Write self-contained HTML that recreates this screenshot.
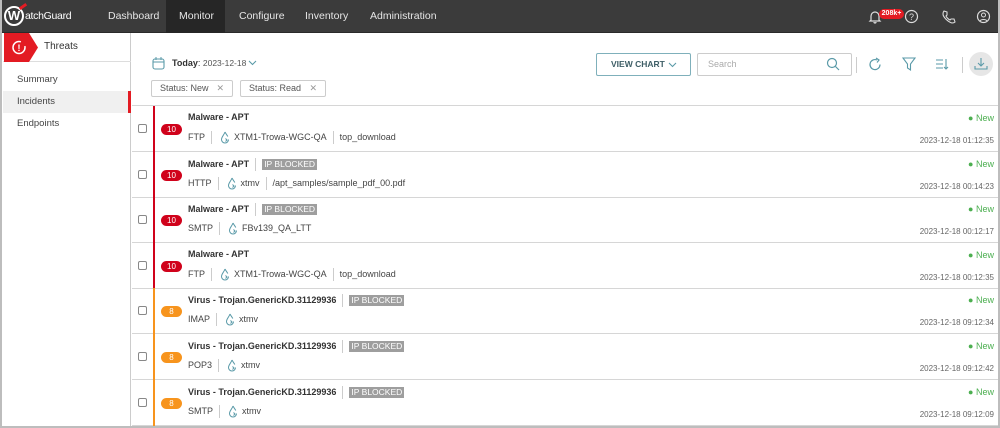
<!DOCTYPE html>
<html><head><meta charset="utf-8"><style>
*{margin:0;padding:0;box-sizing:border-box}
body{width:1000px;height:428px;overflow:hidden;background:#fff;font-family:"Liberation Sans",sans-serif;color:#333;position:relative}
.frame{position:absolute;inset:0;border:2px solid #bdbdbd;border-top:none;pointer-events:none;z-index:10}
.top{position:absolute;left:0;top:0;width:1000px;height:33px;background:#3b3b3b;border-bottom:1px solid #2a2a2a}
.nav{position:absolute;top:0;height:33px;line-height:33px;color:#e6e6e6;font-size:10.5px;white-space:nowrap}
.side{position:absolute;left:3px;top:33px;width:128px;height:395px;background:#fff;border-right:1px solid #ccc}
.a{position:absolute}
.row{position:absolute;left:132px;width:866px;height:46px;border-bottom:1px solid #d6d6d6}
.cb{position:absolute;left:6px;top:18px;width:9px;height:9px;border:1px solid #888;border-radius:2px}
.bar{position:absolute;left:21px;top:0;width:2px;height:46px}
.badge{position:absolute;left:29px;top:18px;width:21px;height:11px;border-radius:6px;color:#fff;font-size:8px;line-height:11px;text-align:center}
.title{position:absolute;left:56px;top:6px;font-size:9px;font-weight:bold;color:#333;white-space:nowrap}
.ipb{display:inline-block;background:#9e9e9e;color:#fff;font-weight:normal;font-size:8.5px;padding:0 2px;line-height:11px}
.sep{display:inline-block;width:1px;height:13px;background:#ccc;vertical-align:middle;margin:0 6px}
.l2{position:absolute;left:56px;top:24px;font-size:9px;color:#444;white-space:nowrap;line-height:14px}
.dr{display:inline-block;vertical-align:middle;margin:0 4px 0 2px}
.new{position:absolute;right:4px;top:7px;font-size:9px;color:#4caf50}
.date{position:absolute;right:4px;top:30px;font-size:8px;color:#666}
.chip{position:absolute;top:80px;height:17px;border:1px solid #ccc;border-radius:2px;font-size:9px;color:#555;line-height:15px;padding-left:8px}
</style></head><body>
<div class="top"></div>
<div class="a" style="left:4px;top:6px;width:20px;height:20px;border-radius:50%;border:2px solid #fff;color:#fff;font-weight:bold;font-size:13px;line-height:16px;text-align:center">W</div>
<div class="a" style="left:19px;top:5px;width:8px;height:3px;background:#e31b23;transform:rotate(-35deg)"></div>
<div class="a" style="left:25px;top:10px;color:#fff;font-size:10.5px;letter-spacing:-0.3px">atchGuard</div>
<div class="nav" style="left:108px">Dashboard</div>
<div class="a" style="left:166px;top:0;width:59px;height:33px;background:#262626"></div>
<div class="nav" style="left:179px">Monitor</div>
<div class="nav" style="left:239px">Configure</div>
<div class="nav" style="left:305px">Inventory</div>
<div class="nav" style="left:370px">Administration</div>
<svg class="a" style="left:868px;top:9px" width="14" height="16" viewBox="0 0 14 16"><path d="M3 11V7a4 4 0 0 1 8 0v4l1 1H2z M6 13a1 1 0 0 0 2 0" fill="none" stroke="#ddd" stroke-width="1.2"/></svg>
<div class="a" style="left:879px;top:9px;width:25px;height:10px;background:#e31b23;border-radius:5px;color:#fff;font-size:7px;font-weight:bold;line-height:10px;text-align:center">208k+</div>
<svg class="a" style="left:904px;top:9px" width="15" height="15"><circle cx="7.5" cy="7.5" r="6" fill="none" stroke="#ddd" stroke-width="1.2"/><text x="7.5" y="11" font-size="9" fill="#ddd" text-anchor="middle" font-family="Liberation Sans">?</text></svg>
<svg class="a" style="left:941px;top:9px" width="15" height="15"><path d="M3 2l3 1 0 3-1 1c1 2 2 3 4 4l1-1 3 0 1 3c-1 1-2 1-3 1C7 13 2 8 2 5c0-1 0-2 1-3z" fill="none" stroke="#ddd" stroke-width="1.1"/></svg>
<svg class="a" style="left:976px;top:9px" width="15" height="15"><circle cx="7.5" cy="7.5" r="6" fill="none" stroke="#ddd" stroke-width="1.2"/><circle cx="7.5" cy="6" r="2" fill="none" stroke="#ddd"/><path d="M4 12c1-2 6-2 7 0" fill="none" stroke="#ddd"/></svg>

<div class="side">
<div class="a" style="left:0;top:0;width:128px;height:29px;border-bottom:1px solid #ddd"></div>
<svg class="a" style="left:1px;top:0" width="36" height="30"><path d="M0 0h25l9 14.5-9 14.5H0z" fill="#e31b23"/><circle cx="15" cy="14.5" r="6" fill="none" stroke="#fff" stroke-width="1.5" stroke-dasharray="30 6"/><text x="15" y="18" font-size="9" font-weight="bold" fill="#fff" text-anchor="middle" font-family="Liberation Sans">!</text></svg>
<div class="a" style="left:41px;top:8px;font-size:10px">Threats</div>
<div class="a" style="left:14px;top:41px;font-size:9.5px;color:#444">Summary</div>
<div class="a" style="left:0;top:58px;width:128px;height:22px;background:#f0f0f0"></div>
<div class="a" style="left:125px;top:58px;width:3px;height:22px;background:#e31b23"></div>
<div class="a" style="left:14px;top:63px;font-size:9.5px;color:#444">Incidents</div>
<div class="a" style="left:14px;top:85px;font-size:9.5px;color:#444">Endpoints</div>
</div>

<svg class="a" style="left:152px;top:57px" width="13" height="13"><rect x="1" y="2" width="11" height="10" rx="2" fill="none" stroke="#5a9aa8" stroke-width="1.1"/><path d="M1 5h11M4 0v3M9 0v3" stroke="#5a9aa8"/></svg>
<div class="a" style="left:172px;top:58px;font-size:9px"><b>Today</b>: <span style="font-size:8.5px;color:#555">2023-12-18</span></div>
<svg class="a" style="left:248px;top:60px" width="9" height="6"><path d="M1 1l3.5 3.5L8 1" fill="none" stroke="#5a9aa8" stroke-width="1.1"/></svg>
<div class="chip" style="left:151px;width:82px">Status: New <span style="position:absolute;right:8px;color:#999">✕</span></div>
<div class="chip" style="left:240px;width:86px">Status: Read <span style="position:absolute;right:8px;color:#999">✕</span></div>

<div class="a" style="left:596px;top:53px;width:95px;height:23px;border:1px solid #7fb0bb;border-radius:2px;font-size:8.5px;font-weight:bold;color:#3e5e66;line-height:21px;padding-left:14px">VIEW CHART</div>
<svg class="a" style="left:668px;top:62px" width="9" height="6"><path d="M1 1l3.5 3.5L8 1" fill="none" stroke="#5a9aa8" stroke-width="1.1"/></svg>
<div class="a" style="left:697px;top:53px;width:155px;height:23px;border:1px solid #ccc;border-radius:2px;font-size:9px;color:#aaa;line-height:21px;padding-left:10px">Search</div>
<svg class="a" style="left:826px;top:57px" width="14" height="14"><circle cx="6" cy="6" r="4.5" fill="none" stroke="#5a9aa8" stroke-width="1.2"/><path d="M9.5 9.5l3.5 3.5" stroke="#5a9aa8" stroke-width="1.2"/></svg>
<div class="a" style="left:856px;top:57px;width:1px;height:16px;background:#ccc"></div>
<svg class="a" style="left:868px;top:57px" width="15" height="15"><path d="M12 7.5A5 5 0 1 1 9 3" fill="none" stroke="#5a9aa8" stroke-width="1.2"/><path d="M8 1l3 2-2 2.5" fill="none" stroke="#5a9aa8" stroke-width="1.2"/></svg>
<svg class="a" style="left:902px;top:57px" width="14" height="15"><path d="M1 1h12L8.5 7v6l-3-2V7z" fill="none" stroke="#5a9aa8" stroke-width="1.1"/></svg>
<svg class="a" style="left:935px;top:57px" width="14" height="15"><path d="M1 3h7M1 7h7M1 11h7M11 2v10M9 10l2 2 2-2" fill="none" stroke="#5a9aa8" stroke-width="1.1"/></svg>
<div class="a" style="left:962px;top:57px;width:1px;height:16px;background:#ccc"></div>
<div class="a" style="left:969px;top:52px;width:24px;height:24px;border-radius:50%;background:#e6e6e6"></div>
<svg class="a" style="left:974px;top:57px" width="14" height="14"><path d="M7 1v8M4 6l3 3 3-3M1 9v3h12V9" fill="none" stroke="#5a9aa8" stroke-width="1.1"/></svg>
<div class="a" style="left:132px;top:105px;width:866px;height:1px;background:#d6d6d6"></div>

<svg width="0" height="0" style="position:absolute"><defs><symbol id="d" viewBox="0 0 10 13"><path d="M5 1C4 4 1.5 6 1.5 8.5a3.5 3.5 0 0 0 7 0M5 1c1 2 2 3 2.8 4.5M5.5 7.5l1.5 1.5-1.5 1.5" fill="none" stroke="#5a9aa8" stroke-width="1"/></symbol></defs></svg>

<div class="row" style="top:106px"><div class="cb"></div><div class="bar" style="background:#d0021b"></div><div class="badge" style="background:#d0021b">10</div><div class="title">Malware - APT</div><div class="l2">FTP<span class="sep"></span><svg class="dr" width="10" height="13"><use href="#d"/></svg>XTM1-Trowa-WGC-QA<span class="sep"></span>top_download</div><div class="new">● New</div><div class="date">2023-12-18 01:12:35</div></div>
<div class="row" style="top:152px"><div class="cb"></div><div class="bar" style="background:#d0021b"></div><div class="badge" style="background:#d0021b">10</div><div class="title">Malware - APT<span class="sep"></span><span class="ipb">IP BLOCKED</span></div><div class="l2">HTTP<span class="sep"></span><svg class="dr" width="10" height="13"><use href="#d"/></svg>xtmv<span class="sep"></span>/apt_samples/sample_pdf_00.pdf</div><div class="new">● New</div><div class="date">2023-12-18 00:14:23</div></div>
<div class="row" style="top:197px"><div class="cb"></div><div class="bar" style="background:#d0021b"></div><div class="badge" style="background:#d0021b">10</div><div class="title">Malware - APT<span class="sep"></span><span class="ipb">IP BLOCKED</span></div><div class="l2">SMTP<span class="sep"></span><svg class="dr" width="10" height="13"><use href="#d"/></svg>FBv139_QA_LTT</div><div class="new">● New</div><div class="date">2023-12-18 00:12:17</div></div>
<div class="row" style="top:243px"><div class="cb"></div><div class="bar" style="background:#d0021b"></div><div class="badge" style="background:#d0021b">10</div><div class="title">Malware - APT</div><div class="l2">FTP<span class="sep"></span><svg class="dr" width="10" height="13"><use href="#d"/></svg>XTM1-Trowa-WGC-QA<span class="sep"></span>top_download</div><div class="new">● New</div><div class="date">2023-12-18 00:12:35</div></div>
<div class="row" style="top:288px"><div class="cb"></div><div class="bar" style="background:#f7941d"></div><div class="badge" style="background:#f7941d">8</div><div class="title">Virus - Trojan.GenericKD.31129936<span class="sep"></span><span class="ipb">IP BLOCKED</span></div><div class="l2">IMAP<span class="sep"></span><svg class="dr" width="10" height="13"><use href="#d"/></svg>xtmv</div><div class="new">● New</div><div class="date">2023-12-18 09:12:34</div></div>
<div class="row" style="top:334px"><div class="cb"></div><div class="bar" style="background:#f7941d"></div><div class="badge" style="background:#f7941d">8</div><div class="title">Virus - Trojan.GenericKD.31129936<span class="sep"></span><span class="ipb">IP BLOCKED</span></div><div class="l2">POP3<span class="sep"></span><svg class="dr" width="10" height="13"><use href="#d"/></svg>xtmv</div><div class="new">● New</div><div class="date">2023-12-18 09:12:42</div></div>
<div class="row" style="top:380px"><div class="cb"></div><div class="bar" style="background:#f7941d"></div><div class="badge" style="background:#f7941d">8</div><div class="title">Virus - Trojan.GenericKD.31129936<span class="sep"></span><span class="ipb">IP BLOCKED</span></div><div class="l2">SMTP<span class="sep"></span><svg class="dr" width="10" height="13"><use href="#d"/></svg>xtmv</div><div class="new">● New</div><div class="date">2023-12-18 09:12:09</div></div>
<div class="frame"></div>
</body></html>
